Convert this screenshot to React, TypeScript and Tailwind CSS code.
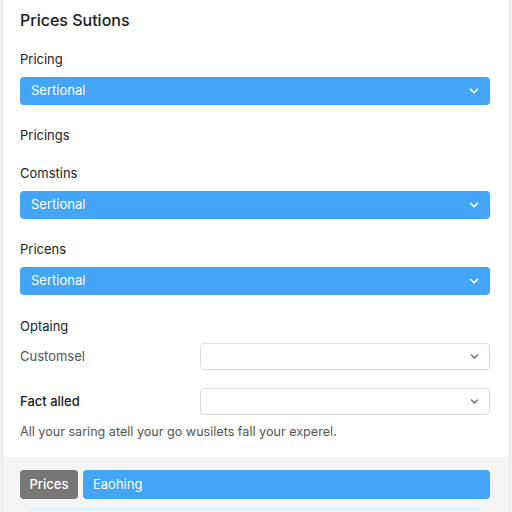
import { ChevronDown } from 'lucide-react'

function BlueSelect({ value }: { value: string }) {
  return (
    <div className="flex h-[28px] items-center justify-between rounded-[4px] bg-[#42a5f5] pl-[11px] pr-[9px] text-[13px] text-white">
      <span>{value}</span>
      <ChevronDown size={14} strokeWidth={3} />
    </div>
  )
}

function PlainSelect() {
  return (
    <div className="flex h-[27px] flex-1 items-center justify-end rounded-[4px] border border-[#dcdcdc] bg-white pr-[8px] text-[#555]">
      <ChevronDown size={13} strokeWidth={2} />
    </div>
  )
}

export default function App() {
  return (
    <div
      className="h-[512px] w-[512px] overflow-hidden bg-[#f2f2f2] px-[2px]"
      style={{ fontFamily: 'Inter, "Noto Sans", sans-serif' }}
    >
      <div className="flex h-full flex-col border-x border-[#e6e6e6] bg-white">
        <div className="pl-[17px] pr-[19px] pt-[8px]">
          <h1 className="h-[24px] text-[16px] font-medium leading-[24px] text-[#1a1a1a]">Prices Sutions</h1>

          <div className="mt-[17px] h-[20px] text-[13px] leading-[20px] text-[#222]">Pricing</div>
          <div className="mt-[8px]">
            <BlueSelect value="Sertional" />
          </div>

          <div className="mt-[20px] h-[20px] text-[13px] leading-[20px] text-[#222]">Pricings</div>

          <div className="mt-[18px] h-[20px] text-[13px] leading-[20px] text-[#222]">Comstins</div>
          <div className="mt-[8px]">
            <BlueSelect value="Sertional" />
          </div>

          <div className="mt-[20px] h-[20px] text-[13px] leading-[20px] text-[#222]">Pricens</div>
          <div className="mt-[8px]">
            <BlueSelect value="Sertional" />
          </div>

          <div className="mt-[21px] h-[20px] text-[13px] leading-[20px] text-[#222]">Optaing</div>
          <div className="mt-[7px] flex items-center">
            <span className="w-[180px] text-[13px] text-[#555]">Customsel</span>
            <PlainSelect />
          </div>
          <div className="mt-[18px] flex items-center">
            <span className="w-[180px] text-[13px] font-medium text-[#1a1a1a]">Fact alled</span>
            <PlainSelect />
          </div>
          <p className="mt-[7px] h-[20px] text-[12.6px] leading-[20px] text-[#555]">
            All your saring atell your go wusilets fall your experel.
          </p>
        </div>

        <div className="mt-[15px] flex flex-1 flex-col bg-[#f5f5f5] pl-[17px] pr-[19px] pt-[13px]">
          <div className="flex gap-[5px]">
            <button className="h-[29px] w-[58px] rounded-[4px] bg-[#777777] text-[13px] font-medium text-white">
              Prices
            </button>
            <button className="h-[29px] flex-1 rounded-[4px] bg-[#42a5f5] pl-[10px] text-left text-[13px] text-white">
              Eaohing
            </button>
          </div>
          <div className="mx-[10px] mt-[9px] h-[3px] bg-[#dff3f9]" />
        </div>
      </div>
    </div>
  )
}
